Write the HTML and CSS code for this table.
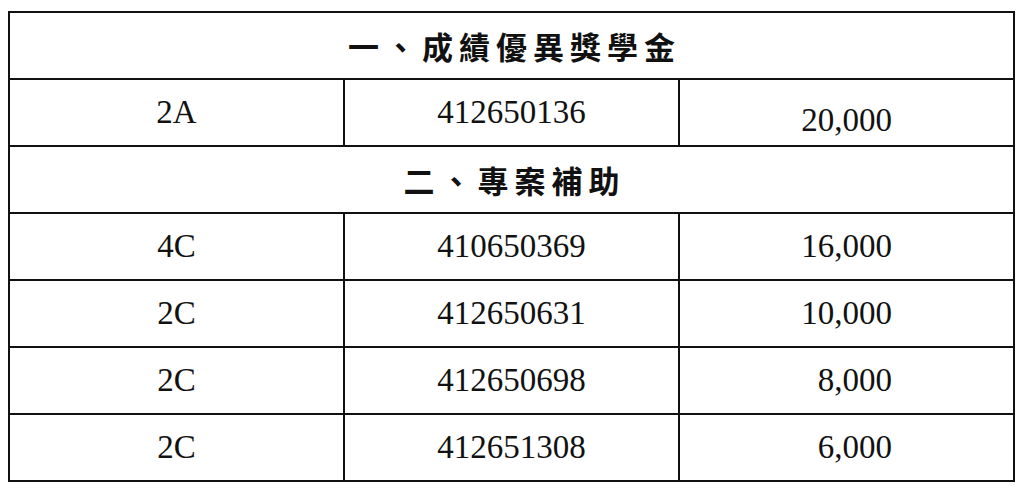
FILE: index.html
```html
<!DOCTYPE html>
<html lang="zh-Hant">
<head>
<meta charset="utf-8">
<title>獎學金名單</title>
<link rel="stylesheet" href="styles.css">
</head>
<body>
<div class="page">
  <table class="grid">
    <colgroup><col class="c"><col class="c"><col class="c"></colgroup>
    <tr><td class="section" colspan="3"><span class="title">一、成績優異獎學金</span></td></tr>
    <tr><td class="cls">2A</td><td class="sid">412650136</td><td class="amt low">20,000</td></tr>
    <tr><td class="section" colspan="3"><span class="title">二、專案補助</span></td></tr>
    <tr><td class="cls">4C</td><td class="sid">410650369</td><td class="amt">16,000</td></tr>
    <tr><td class="cls">2C</td><td class="sid">412650631</td><td class="amt">10,000</td></tr>
    <tr><td class="cls">2C</td><td class="sid">412650698</td><td class="amt">8,000</td></tr>
    <tr><td class="cls">2C</td><td class="sid">412651308</td><td class="amt">6,000</td></tr>
  </table>
</div>
</body>
</html>
```

FILE: styles.css
```css
html, body {
  margin: 0;
  padding: 0;
  background: #fff;
}

.page {
  padding: 11px 0 0 8px;
}

.grid {
  border-collapse: collapse;
  table-layout: fixed;
  width: 1005px;
  border: 2px solid #111;
  color: #111;
  font-family: "Liberation Serif", "Times New Roman", serif;
  font-size: 33px;
}

.grid .c {
  width: 335px;
}

.grid td {
  border: 2px solid #111;
  height: 65px;
  padding: 0;
  text-align: center;
  vertical-align: middle;
  line-height: 1;
}

.grid td.section {
  font-family: "Noto Sans CJK TC", "Noto Sans CJK SC", sans-serif;
  font-weight: 700;
  font-size: 31px;
}

.title {
  letter-spacing: 6px;
  margin-right: -6px;
}

.grid td.amt {
  text-align: right;
  padding-right: 121px;
}

.grid td.amt.low {
  height: 57px;
  vertical-align: bottom;
  padding-bottom: 8px;
}
```
